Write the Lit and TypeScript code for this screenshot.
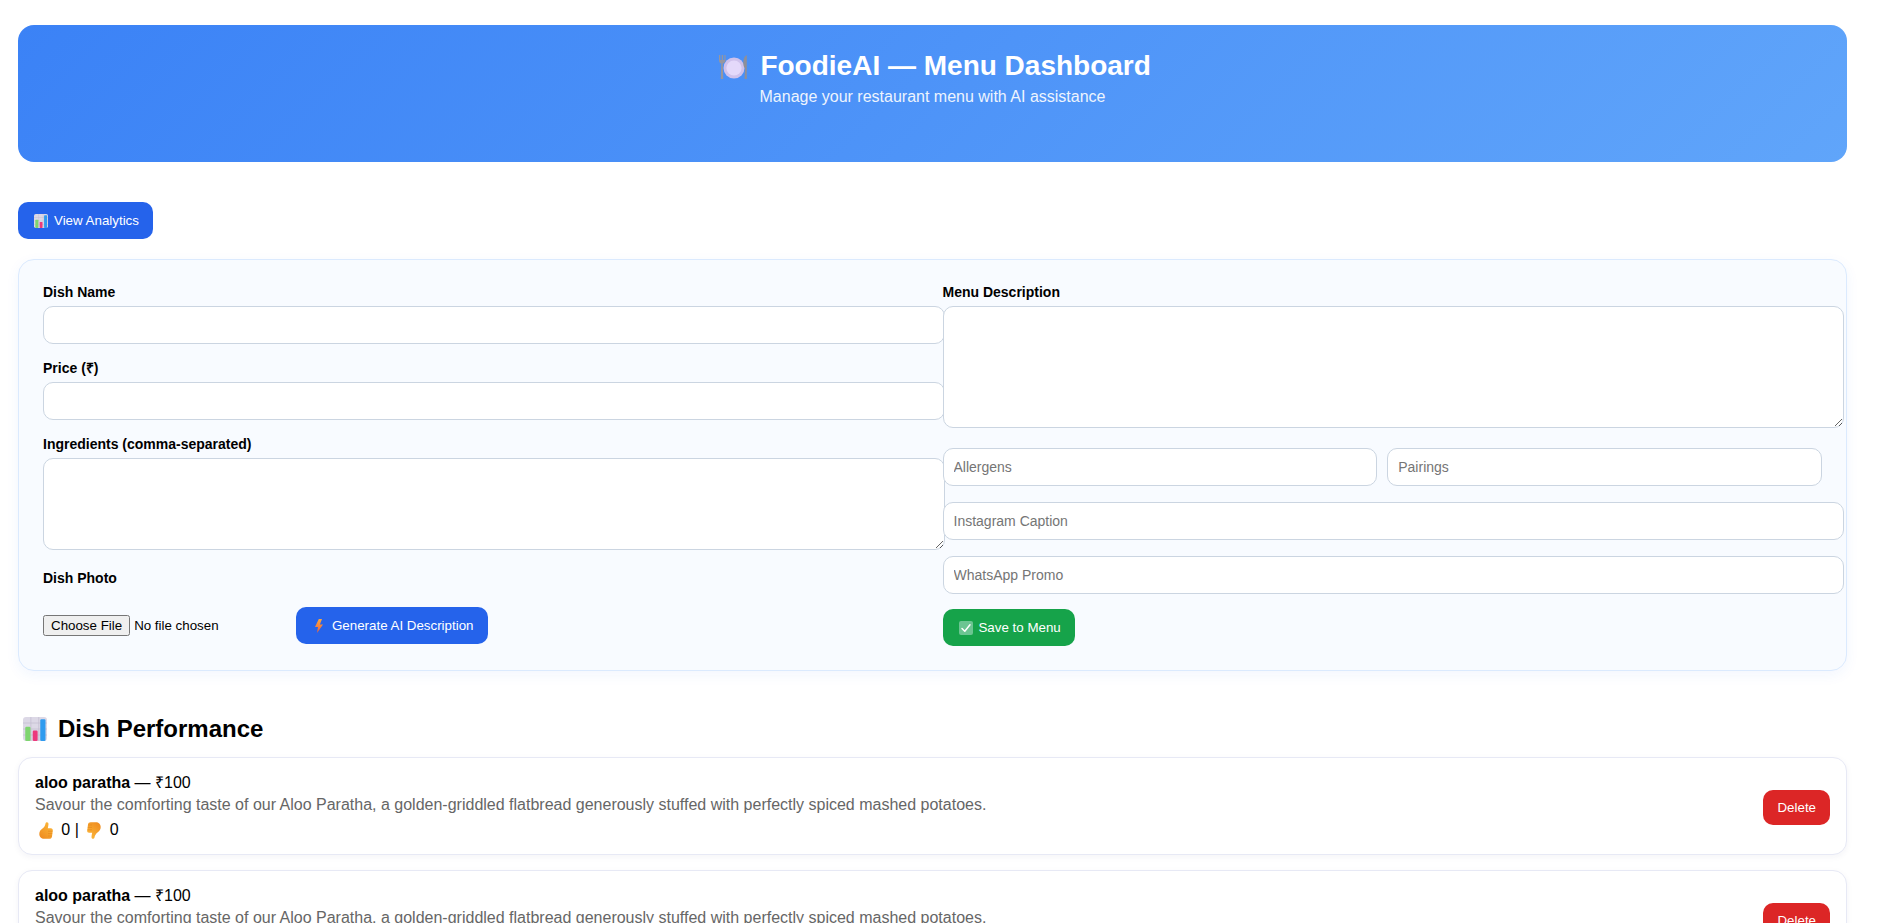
import { LitElement, html, css, svg } from "lit";
import { customElement } from "lit/decorators.js";

const plate = html`<svg viewBox="0 0 28 24" width="28" height="24" aria-hidden="true">
  <circle cx="15" cy="13" r="10.500" fill="#cfc2ec"/>
  <circle cx="15" cy="13" r="7.600" fill="#e4d9fa"/>
  <path d="M0 0v5.500c0 1.600 .9 2.600 2.200 3.100L1.800 24h2.400L3.800 8.600C5.100 8.100 6.500 7.100 6.500 5.500V0H5.400v5H4.100V0H2.700v5H1.300V0z" fill="#96969f"/>
  <path d="M27.800 0c-2 .8-3.500 4-3.500 8 0 3 .9 4.500 1.700 5L25.600 24h2.200z" fill="#8f8f98"/>
</svg>`;

const chart = (size: number) => html`<svg viewBox="0 0 32 32" width=${size} height=${size} aria-hidden="true">
  <rect x="0" y="0" width="32" height="32" rx="4" fill="#dcd8e6"/>
  ${svg`<path d="M0 8h32M0 16h32M0 24h32M10.500 0v32M21 0v32" stroke="#c3bed0" stroke-width="1" fill="none"/>`}
  <rect x="3" y="13" width="7" height="19" rx="1.500" fill="#7ed56f"/>
  <rect x="13" y="18" width="6.500" height="14" rx="1.500" fill="#ec3a7c"/>
  <rect x="23" y="3" width="7" height="29" rx="1.500" fill="#2f9bef"/>
</svg>`;

const bolt = html`<svg viewBox="0 0 8 14" width="8" height="14" aria-hidden="true">
  <defs><linearGradient id="b" x1="0" y1="0" x2="0" y2="1"><stop offset="0" stop-color="#f9a83f"/><stop offset="1" stop-color="#f0603c"/></linearGradient></defs>
  <path d="M3.800 0 0 8h3L2 14 8 5.500H4.900L7 0z" fill="url(#b)"/>
</svg>`;

const check = html`<svg viewBox="0 0 14 14" width="14" height="14" aria-hidden="true">
  <rect width="14" height="14" rx="2" fill="#6cc592"/>
  <path d="M3 7.500 5.800 10.300 11 3.800" fill="none" stroke="#fff" stroke-width="1.500" stroke-linecap="round" stroke-linejoin="round"/>
</svg>`;

const thumb = (id: string) => html`<svg viewBox="0 0 14 17" width="14" height="17" aria-hidden="true">
  <defs><linearGradient id=${id} x1="0.100" y1="1" x2="0.800" y2="0"><stop offset="0" stop-color="#ee8a1f"/><stop offset="1" stop-color="#fcb83a"/></linearGradient></defs>
  <path d="M7.500.3C8.800 0 9.600 1 9.500 2.300 9.400 3.800 9 5 8.800 6.200h3C13.200 6.200 14 7.200 13.800 8.500L13 14.500C12.800 16 11.800 16.800 10.300 16.800H5C2.500 16.800.3 15 .3 12 .3 9.500 1.500 8 3.200 6.800 5 5.500 6.300 3.500 6.500 1.500 6.600.8 7 .4 7.500.3z" fill="url(#${id})"/>
  <path d="M9 9.200h4.500M9 11.600h4.200M9 14h3.800" stroke="#e2831c" stroke-width=".6" fill="none"/>
</svg>`;

interface Dish { name: string; price: number; description: string; up: number; down: number; }

const DISHES: Dish[] = [
  { name: "aloo paratha", price: 100, description: "Savour the comforting taste of our Aloo Paratha, a golden-griddled flatbread generously stuffed with perfectly spiced mashed potatoes.", up: 0, down: 0 },
  { name: "aloo paratha", price: 100, description: "Savour the comforting taste of our Aloo Paratha, a golden-griddled flatbread generously stuffed with perfectly spiced mashed potatoes.", up: 0, down: 0 },
];

@customElement("app-root")
export class AppRoot extends LitElement {
  static styles = css`
    :host {
      display: block;
      height: 923px;
      overflow: hidden;
      box-sizing: border-box;
      padding: 25px 34px 0 18px;
      background: #fff;
      color: #000;
      font-family: "Liberation Sans", Arial, sans-serif;
    }
    .hero {
      padding: 25px 24px 56px;
      border-radius: 16px;
      background: linear-gradient(135deg, #3b82f6, #60a5fa);
      color: #fff;
      text-align: center;
    }
    .hero h1 {
      margin: 0 0 6px;
      font-size: 28px;
      line-height: 32px;
      font-weight: 700;
    }
    .hero p {
      margin: 0;
      font-size: 16px;
      line-height: 18px;
      opacity: 0.9;
    }
    .emoji {
      display: inline-flex;
      align-items: center;
      justify-content: center;
      vertical-align: middle;
    }
    .emoji-title {
      width: 38.5px;
      height: 24px;
      margin-right: 7.8px;
      vertical-align: -4px;
    }
    .btn {
      display: inline-flex;
      align-items: center;
      border: 0;
      border-radius: 10px;
      padding: 10px 14px;
      height: 37px;
      box-sizing: border-box;
      color: #fff;
      font: 500 13.333px "Liberation Sans", Arial, sans-serif;
      cursor: pointer;
    }
    .btn .emoji {
      width: 18.300px;
      margin-right: 3.700px;
    }
    .blue { background: #2563eb; }
    .green { background: #16a34a; }
    .analytics { margin-top: 40px; display: flex; }
    .form {
      margin-top: 20px;
      display: grid;
      grid-template-columns: minmax(0, 1fr) minmax(0, 1fr);
      column-gap: 20px;
      padding: 24px;
      border: 1px solid #dbeafe;
      border-radius: 16px;
      background: #f8fbff;
      box-shadow: 0 4px 14px rgba(37, 99, 235, 0.06);
    }
    label {
      display: block;
      margin-bottom: 6px;
      font-size: 14px;
      line-height: 16px;
      font-weight: 700;
    }
    input[type="text"],
    textarea {
      display: block;
      width: 100%;
      height: 16px;
      box-sizing: content-box;
      margin: 0 0 16px;
      padding: 10px;
      border: 1px solid #cbd5e1;
      border-radius: 10px;
      background: #fff;
      font: 14px/16px "Liberation Sans", Arial, sans-serif;
      outline: none;
    }
    textarea.short { height: 70px; margin-bottom: 20px; }
    textarea.tall { height: 100px; margin-bottom: 20px; }
    .pair {
      display: flex;
      gap: 10px;
      margin-bottom: 16px;
    }
    .pair input[type="text"] {
      flex: 1 1 0;
      min-width: 0;
      width: auto;
      box-sizing: border-box;
      height: 38px;
      margin: 0;
    }
    .upload {
      display: flex;
      align-items: center;
      margin-top: 21px;
    }
    .upload input {
      width: 253px;
      flex: none;
      font: 13.333px "Liberation Sans", Arial, sans-serif;
    }
    .save { margin-top: -1px; }
    h2 {
      margin: 44px 0 14px;
      font-size: 24px;
      line-height: 28px;
      font-weight: 700;
    }
    .emoji-head {
      width: 33.300px;
      height: 24px;
      margin-right: 6.700px;
      vertical-align: -4px;
    }
    .dish {
      display: flex;
      align-items: center;
      justify-content: space-between;
      margin-bottom: 15px;
      padding: 16px 16px 15px;
      border: 1px solid #e7e9f5;
      border-radius: 14px;
      background: #fff;
      box-shadow: 0 2px 6px rgba(30, 41, 99, 0.05);
      font-size: 16px;
      line-height: 18px;
    }
    .dish p { margin: 0; }
    .dish .desc { margin-top: 4px; color: #666; }
    .dish .votes { margin-top: 7px; }
    .emoji-vote {
      width: 21.900px;
      height: 18px;
      vertical-align: top;
    }
    .down { display: flex; transform: rotate(180deg); }
    .delete {
      flex: none;
      height: 35px;
      margin-top: 1px;
      background: #dc2626;
    }
  `;

  private dish(d: Dish, i: number) {
    return html`<article class="dish">
      <div>
        <p><strong>${d.name}</strong> — ₹${d.price}</p>
        <p class="desc">${d.description}</p>
        <p class="votes"><span class="emoji emoji-vote">${thumb(`u${i}`)}</span> ${d.up} | <span class="emoji emoji-vote"><span class="down">${thumb(`d${i}`)}</span></span> ${d.down}</p>
      </div>
      <button class="btn delete">Delete</button>
    </article>`;
  }

  render() {
    return html`
      <header class="hero">
        <h1><span class="emoji emoji-title">${plate}</span>FoodieAI — Menu Dashboard</h1>
        <p>Manage your restaurant menu with AI assistance</p>
      </header>
      <div class="analytics">
        <button class="btn blue"><span class="emoji">${chart(14)}</span>View Analytics</button>
      </div>
      <section class="form">
        <div>
          <label>Dish Name</label>
          <input type="text" />
          <label>Price (₹)</label>
          <input type="text" />
          <label>Ingredients (comma-separated)</label>
          <textarea class="short"></textarea>
          <label>Dish Photo</label>
          <div class="upload">
            <input type="file" />
            <button class="btn blue"><span class="emoji">${bolt}</span>Generate AI Description</button>
          </div>
        </div>
        <div>
          <label>Menu Description</label>
          <textarea class="tall"></textarea>
          <div class="pair">
            <input type="text" placeholder="Allergens" />
            <input type="text" placeholder="Pairings" />
          </div>
          <input type="text" placeholder="Instagram Caption" />
          <input type="text" placeholder="WhatsApp Promo" />
          <button class="btn green save"><span class="emoji">${check}</span>Save to Menu</button>
        </div>
      </section>
      <h2><span class="emoji emoji-head">${chart(24)}</span>Dish Performance</h2>
      ${DISHES.map((d, i) => this.dish(d, i))}
    `;
  }
}
